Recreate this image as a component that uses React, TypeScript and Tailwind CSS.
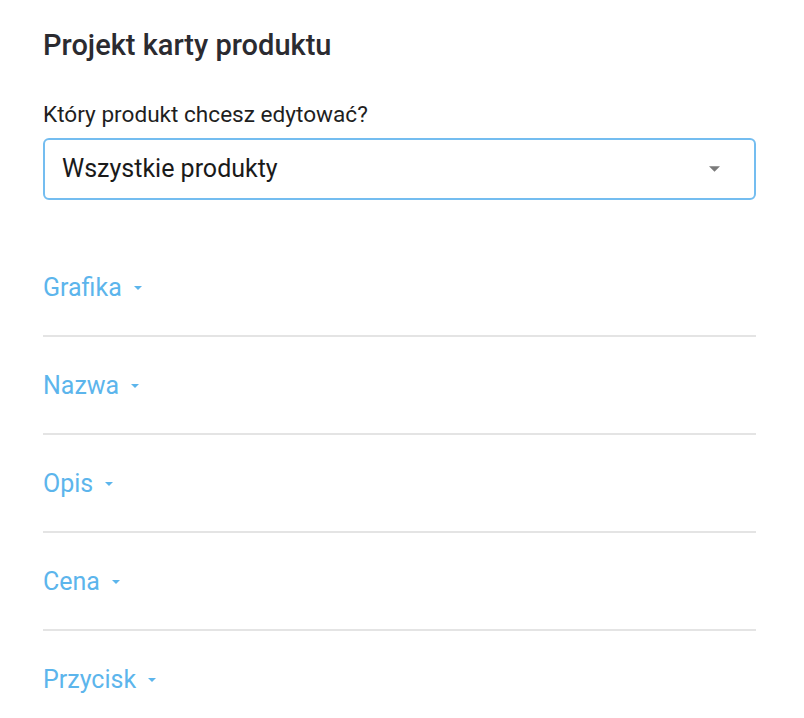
import React, { useState } from 'react';

const sections = ['Grafika', 'Nazwa', 'Opis', 'Cena', 'Przycisk'];

const Caret = ({ className }: { className: string }) => (
  <svg viewBox="0 0 10 5" className={className} fill="currentColor">
    <path d="M0 0h10L5 5z" />
  </svg>
);

export default function App() {
  const [product, setProduct] = useState('Wszystkie produkty');

  return (
    <div className="min-h-screen bg-white pl-[43px] pr-[48px] pt-[27px]" style={{ fontFamily: 'Roboto, "Noto Sans", sans-serif' }}>
      <h1 className="text-[29px] leading-[36px] font-medium text-[#2b2b30]">Projekt karty produktu</h1>

      <label className="block mt-[38px] text-[22.6px] leading-[28px] text-[#1f1f1f]">Który produkt chcesz edytować?</label>
      <div className="mt-[9px] h-[62px] rounded-[6px] border-2 border-[#74bdf0] flex items-center justify-between pl-[17px] pr-[34px]">
        <span className="text-[25px] leading-[32px] pb-[1px] text-[#1a1a1a]">{product}</span>
        <Caret className="w-[11px] h-[6px] text-[#7a7a7a]" />
      </div>

      <div className="mt-[39px]">
        {sections.map((s, i) => (
          <div key={s} className={i < sections.length - 1 ? 'border-b-2 border-[#e4e4e4] pt-[33px] pb-[31px]' : 'pt-[33px] pb-[31px]'}>
            <button type="button" onClick={() => setProduct(product)} className="flex items-center gap-[12px] h-[32px] text-[25px] leading-[32px] text-[#5cb5ec] cursor-pointer">
              {s}
              <Caret className="w-[8px] h-[4px]" />
            </button>
          </div>
        ))}
      </div>
    </div>
  );
}
